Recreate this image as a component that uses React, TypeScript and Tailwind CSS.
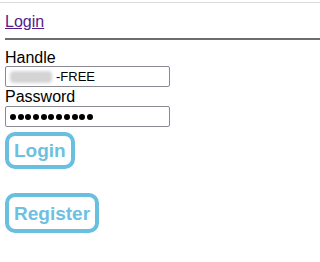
import React from 'react'

const font = "font-['Liberation_Sans',Arial,sans-serif]"

export default function App() {
  return (
    <div className={`${font} min-h-[262px] bg-white text-black`}>
      <div className="mt-[2px] h-px bg-[#dadada]" />
      <div className="pl-[5px]">
        <div className="pt-[9px] text-[16px] leading-[19px]">
          <a href="#" className="text-[#551a8b] underline">Login</a>
        </div>
        <div className="mt-[7px] h-[2px] bg-[#6e6e6e]" />

        <form className="flex flex-col items-start" onSubmit={(e) => e.preventDefault()}>
          <label className="mt-[9px] text-[16px] leading-[17px]">Handle</label>
          <div className="flex h-[21px] w-[165px] items-center rounded-[2px] border border-[#8a8a94] pl-[3px] text-[13px] leading-none">
            <span className="ml-[1px] h-[12px] w-[42px] rounded-sm bg-[#d4d4d4] blur-[1.5px]" />
            <span className="ml-[4px]">-FREE</span>
          </div>

          <label className="text-[16px] leading-[19px]">Password</label>
          <div className="flex h-[21px] w-[165px] items-center gap-[1.7px] rounded-[2px] border border-[#8a8a94] pl-[4px]">
            {Array.from({ length: 11 }).map((_, i) => (
              <span key={i} className="h-[6px] w-[6px] shrink-0 rounded-full bg-black" />
            ))}
          </div>

          <button
            type="submit"
            className="mt-[5px] flex h-[37px] items-center rounded-[10px] border-[4px] border-[#69bfe0] px-[5px] text-[19px] font-bold leading-none text-[#6cc1e1]"
          >
            Login
          </button>

          <button
            type="button"
            className="mt-[24px] flex h-[40px] items-center rounded-[10px] border-[4px] border-[#69bfe0] px-[5px] text-[19px] font-bold leading-none text-[#6cc1e1]"
          >
            Register
          </button>
        </form>
      </div>
    </div>
  )
}
